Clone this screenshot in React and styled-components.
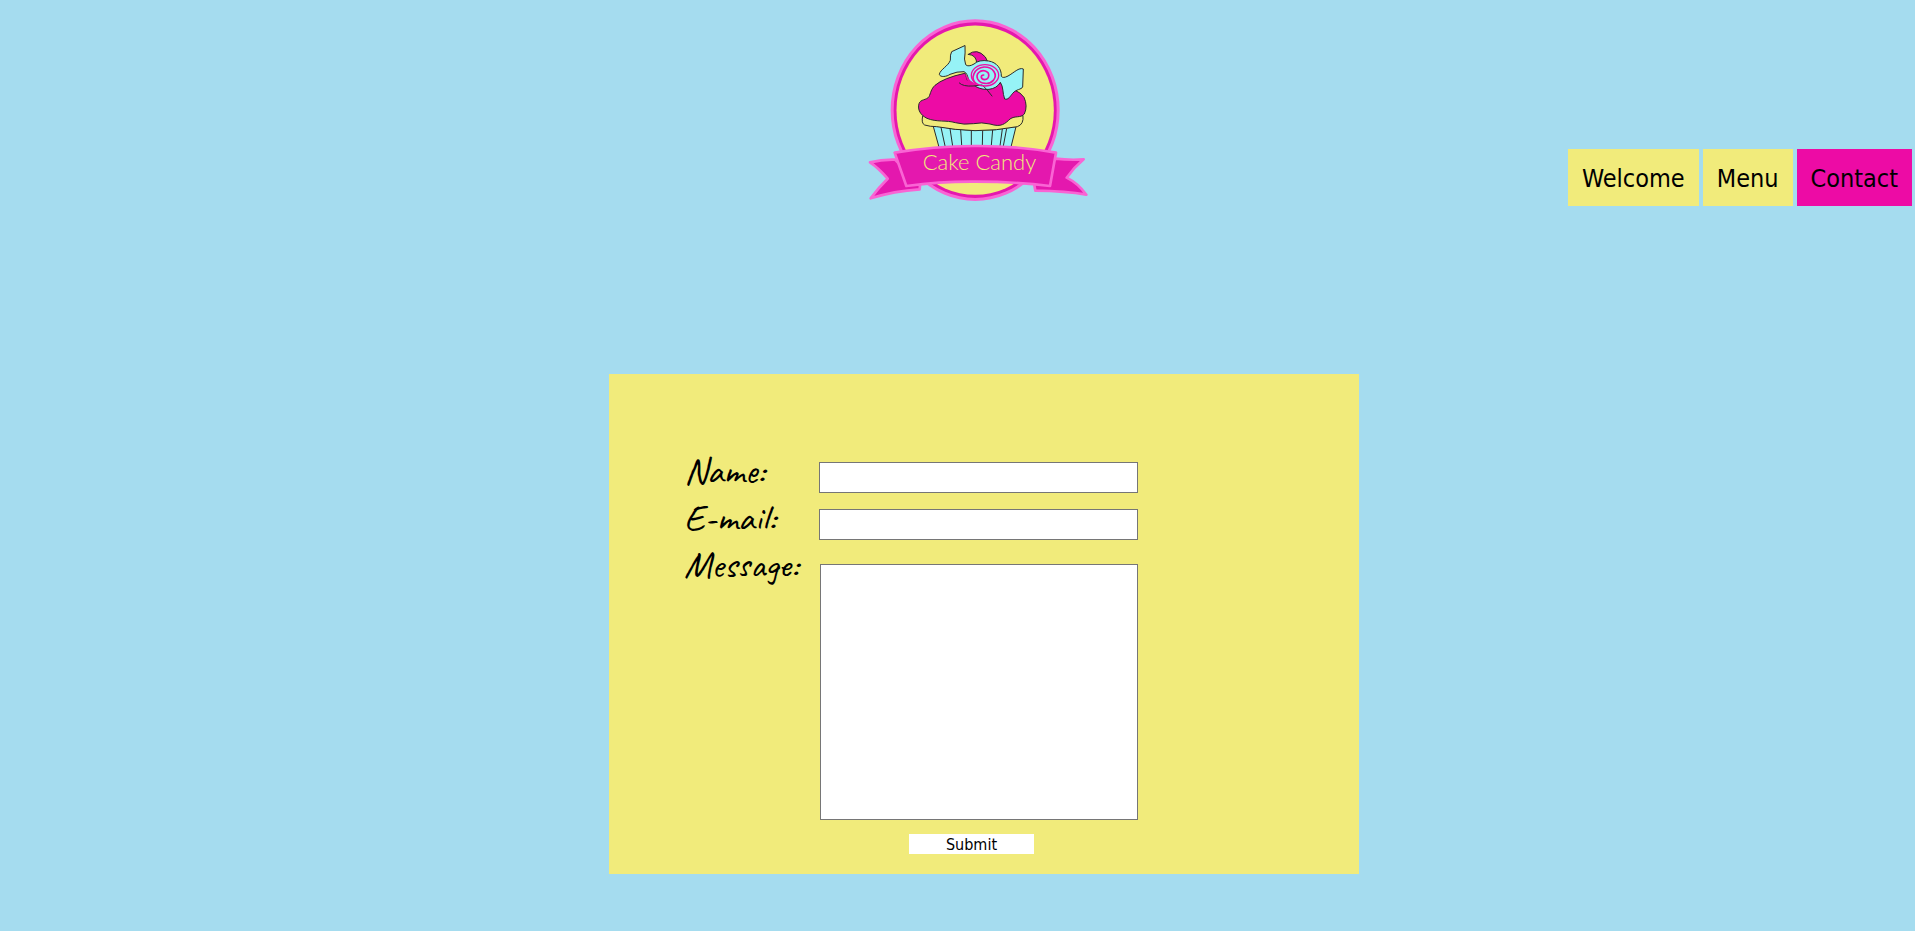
import React from 'react';
import styled, { createGlobalStyle } from 'styled-components';

const sky = '#a5dcef';
const lemon = '#f1eb7b';
const pink = '#ed0ba5';
const uiFont = "Tahoma, 'DejaVu Sans Condensed', 'Noto Sans', sans-serif";

const GlobalStyle = createGlobalStyle`
  * { box-sizing: border-box; }
  body {
    margin: 0;
    background: ${sky};
    color: #000;
    font-family: ${uiFont};
  }
`;

const Header = styled.header`
  display: grid;
  grid-template-columns: 1fr auto 1fr;
  align-items: end;
  padding: 10px 3px 0 44px;
`;

const LogoLink = styled.a`
  grid-column: 2;
  display: block;
`;

const LogoArt = styled.svg`
  display: block;
  width: 220px;
  height: 196px;
`;

const LogoText = styled.text`
  font-family: Lato, sans-serif;
  font-size: 66px;
  font-weight: 300;
  fill: ${lemon};
`;

const Nav = styled.nav`
  display: flex;
  justify-content: flex-end;
  gap: 4px;
`;

const NavLink = styled.a`
  padding: 2px 14px 0;
  font-size: 25px;
  line-height: 55px;
  color: #000;
  text-decoration: none;
  background: ${({ $active }) => ($active ? pink : lemon)};
`;

const Main = styled.main`
  display: flex;
  justify-content: center;
  padding: 168px 0 57px 53px;
`;

const ContactForm = styled.form`
  display: grid;
  grid-template-columns: 135px 319px;
  grid-template-rows: 47px 47px auto auto;
  width: 750px;
  max-width: 100%;
  padding: 80px 75px 20px;
  background: ${lemon};
`;

const Label = styled.label`
  font-family: Caveat, cursive;
  font-size: 38px;
  line-height: 34px;
`;

const TextInput = styled.input`
  height: 31px;
  margin: 8px 0;
  padding: 1px 4px;
  border: 1px solid #767676;
  background: #fff;
  font: 16px ${uiFont};
`;

const MessageBox = styled.textarea`
  height: 256px;
  margin: 16px 0 0 1px;
  padding: 2px 4px;
  border: 1px solid #767676;
  background: #fff;
  font: 16px ${uiFont};
  resize: none;
`;

const SubmitButton = styled.button`
  grid-column: 2;
  width: 125px;
  height: 20px;
  margin: 14px 0 0 90px;
  padding: 2px 0 0;
  border: 0;
  background: #fff;
  color: #000;
  font: 16px/18px ${uiFont};
`;

function Logo() {
  return (
    <LogoArt viewBox="24 0 660 588" role="img" aria-label="Cake Candy">
      <ellipse cx="345.5" cy="300.5" rx="249" ry="268" fill="#e418ae" stroke="#f964d4" strokeWidth="9" />
      <ellipse cx="345.5" cy="300.5" rx="236" ry="254" fill={lemon} />

      <g stroke="#2b2b2b" strokeWidth="3" strokeLinejoin="round" strokeLinecap="round">
        <path d="M219 346L238 415H452L468 350Q345 375 219 346Z" fill="#96f3f6" />
        <path d="M243 352L256 412M270 356L278 408M302 359L305 405M334 361V405M368 361L367 405M398 360L394 405M427 357L420 408M440 355L430 408" fill="none" />
        <path d="M188 318Q183 340 194 345Q210 350 230 350Q285 360 345 362Q410 362 472 350Q492 343 489 318Z" fill={lemon} />
        <path d="M325 133Q351 113 376 141L384 157L350 162Q351 135 325 133Z" fill={pink} />
        <path d="M314 190Q250 204 225 226C213 237 212 250 207 260C200 271 181 267 177 281C172 299 181 315 201 325C229 337 260 330 286 338Q310 345 341 341Q365 336 390 342C424 353 435 341 450 327C466 316 481 325 493 312Q504 288 492 262Q482 247 463 240L425 218L385 225L323 211Z" fill={pink} />
        <path d="M314 107L275 125Q270 133 271 151C265 168 241 178 238 193C240 203 261 200 270 193Q291 184 312 185C320 188 323 198 325 207C337 230 363 240 387 238Q411 235 421 217C431 231 427 249 434 267C445 271 451 258 458 250C469 237 484 239 488 231L490 177C477 171 461 189 444 198Q429 206 424 199C425 176 410 157 386 153Q357 148 342 162Q325 172 317 164Q311 148 315 130Z" fill="#96f3f6" />
        <path d="M314 190L329 230L356 228L330 211Z" fill={pink} stroke="none" />
        <path d="M298 219Q309 230 339 228L367 225Q382 239 396 258" fill="none" />
      </g>

      <ellipse cx="375" cy="196" rx="41" ry="32" fill="none" stroke={pink} strokeWidth="4" />
      <path d="M348 222C330 205 342 174 372 171C400 170 414 195 400 211C388 225 361 223 353 207C346 191 361 179 376 183C391 188 389 207 374 209C361 208 361 195 371 195" fill="none" stroke={pink} strokeWidth="5" strokeLinecap="round" />

      <g fill="#e418ae" stroke="#f964d4" strokeWidth="8" strokeLinejoin="round">
        <path d="M105 449Q66 448 30 457Q56 474 83 506Q57 531 32 565Q102 543 179 538L180 526Z" />
        <path d="M586 446Q630 451 671 448Q642 472 620 503Q654 520 679 554Q618 543 526 542L523 526Z" />
        <path d="M104 428Q220 409 343 408Q471 407 588 428L570 528Q465 515 347 515Q244 514 139 528Z" />
      </g>
      <LogoText x="188" y="481">Cake Candy</LogoText>
    </LogoArt>
  );
}

export default function App() {
  return (
    <>
      <GlobalStyle />
      <Header>
        <LogoLink href="#welcome"><Logo /></LogoLink>
        <Nav>
          <NavLink href="#welcome">Welcome</NavLink>
          <NavLink href="#menu">Menu</NavLink>
          <NavLink href="#contact" $active aria-current="page">Contact</NavLink>
        </Nav>
      </Header>
      <Main>
        <ContactForm onSubmit={(e) => e.preventDefault()}>
          <Label htmlFor="name">Name:</Label>
          <TextInput id="name" name="name" type="text" />
          <Label htmlFor="email">E-mail:</Label>
          <TextInput id="email" name="email" type="email" />
          <Label htmlFor="message">Message:</Label>
          <MessageBox id="message" name="message" />
          <SubmitButton type="submit">Submit</SubmitButton>
        </ContactForm>
      </Main>
    </>
  );
}
